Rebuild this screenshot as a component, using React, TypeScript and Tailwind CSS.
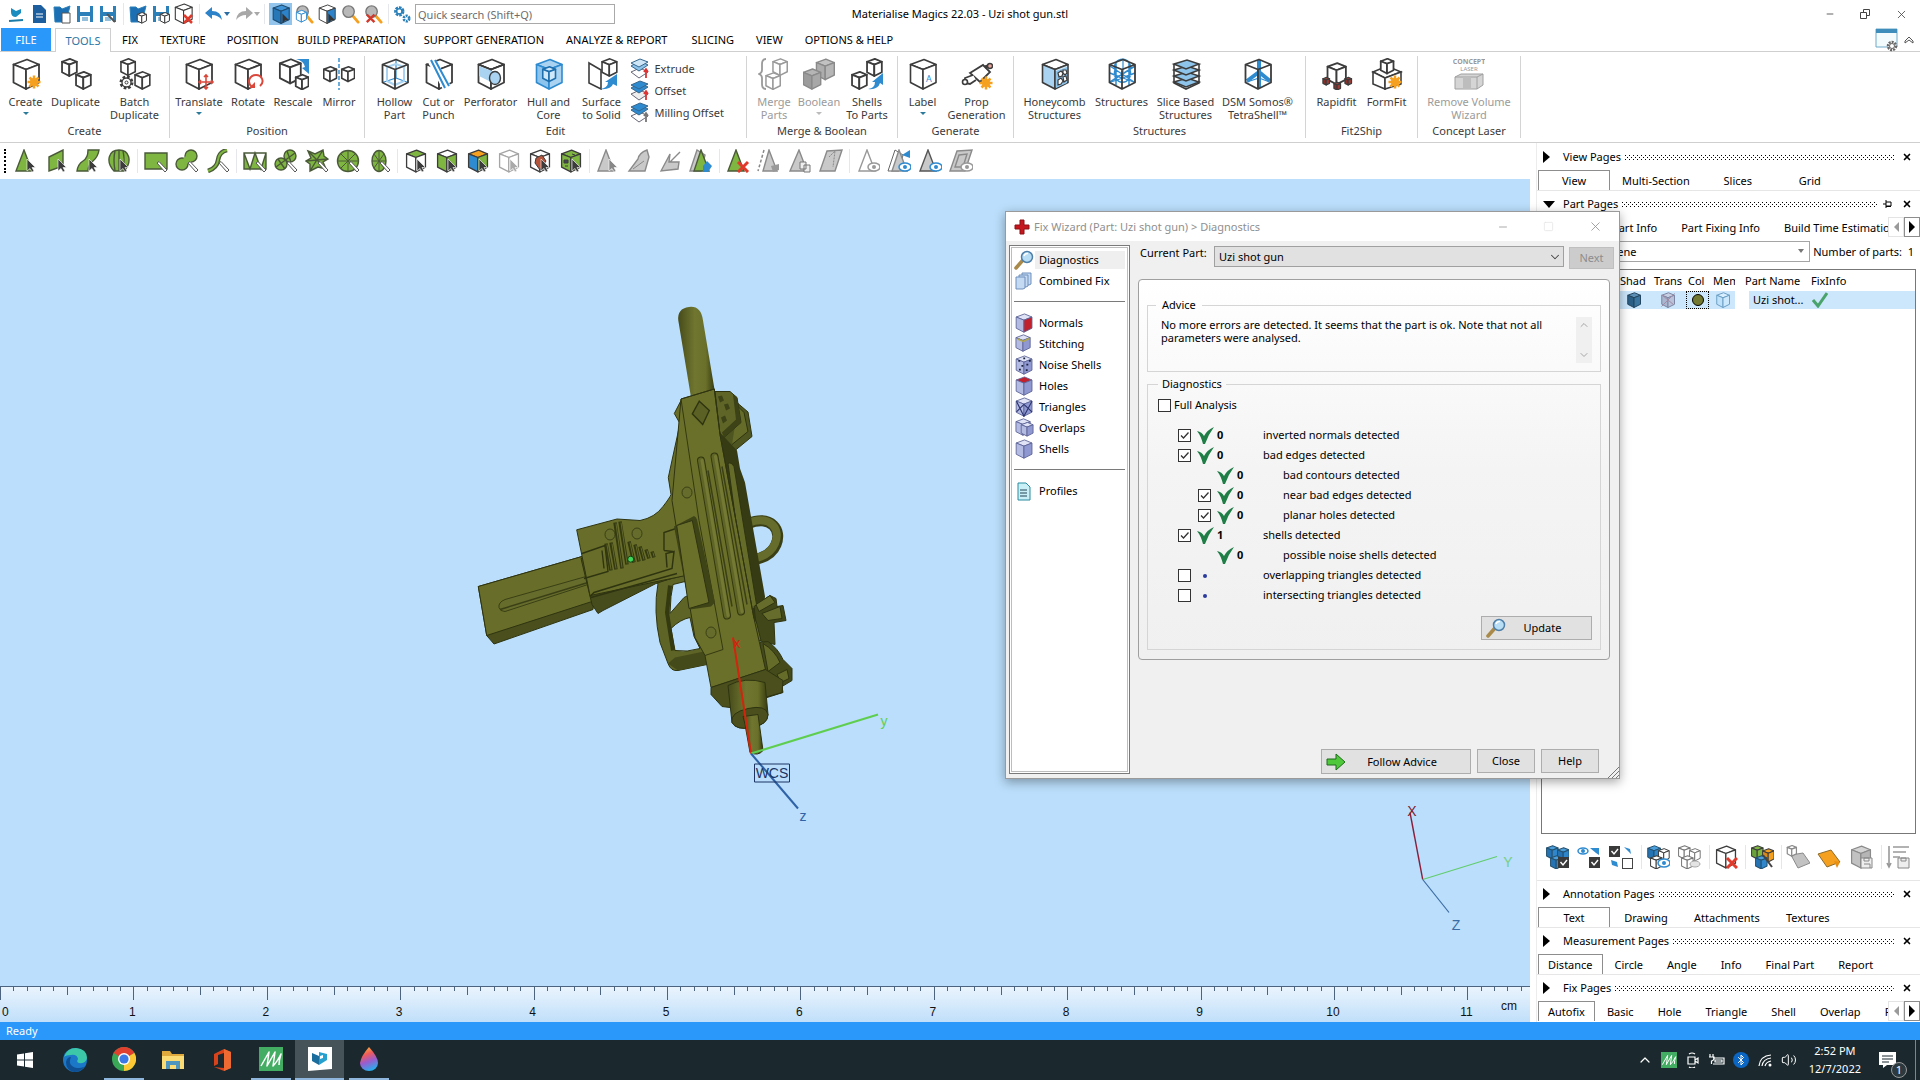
import { useState } from 'react'
import type { ReactNode } from 'react'
import { Bluetooth, ChevronDown, ChevronUp, Minus, Square, Volume2, X } from 'lucide-react'

const INK = '#3c3c3c'
const BLUE = '#2f8bd0'
const PALE = '#a9d3f0'
const ORANGE = '#f5a01e'
const GREEN = '#7fb541'
const RED = '#d9483b'

interface CubeProps {
  x?: number
  y?: number
  s?: number
  top?: string
  left?: string
  right?: string
  stroke?: string
  sw?: number
}

// isometric box on a 32 unit grid
function Cube({ x = 0, y = 0, s = 1, top = '#fff', left = '#fff', right = '#fff', stroke = INK, sw = 2 }: CubeProps) {
  return (
    <g transform={`translate(${x} ${y}) scale(${s})`} stroke={stroke} strokeWidth={sw / s} strokeLinejoin="round">
      <path d="M17 1.500 29 6.500 16 11.500 3.500 6.500Z" fill={top} />
      <path d="M3.500 6.500 16 11.500V31L3.500 24.500Z" fill={left} />
      <path d="M29 6.500 16 11.500V31L29 24.500Z" fill={right} />
    </g>
  )
}

function Burst({ x, y }: { x: number; y: number }) {
  return (
    <g transform={`translate(${x} ${y})`} stroke={ORANGE} strokeWidth="2.500">
      <circle r="4" fill={ORANGE} stroke="none" />
      <path d="M0-6.500V6.500M-6.500 0H6.500M-4.500-4.500 4.500 4.500M4.500-4.500-4.500 4.500" />
    </g>
  )
}

function Wire({ children }: { children?: ReactNode }) {
  return (
    <g fill="none" strokeLinejoin="round">
      <path d="M17 1.500V20M3.500 24.500 17 20 29 24.500" stroke={BLUE} strokeWidth="1.200" />
      {children}
      <path d="M17 1.500 29 6.500V24.500L16 31 3.500 24.500V6.500ZM3.500 6.500 16 11.500 29 6.500M16 11.500V31" stroke={INK} strokeWidth="1.800" />
    </g>
  )
}

const ribbonIcons: Record<string, ReactNode> = {
  create: <><Cube sw={1.8} /><Burst x={24} y={24} /></>,
  duplicate: <><Cube x={0} y={0} s={0.58} sw={1.8} /><Cube x={14} y={13} s={0.58} sw={1.8} /></>,
  batch: (
    <>
      <Cube x={0} y={0} s={0.56} sw={1.6} />
      <Cube x={14} y={13} s={0.58} sw={1.6} />
      <circle cx="7.500" cy="24.500" r="5.500" fill="#fff" stroke={INK} strokeWidth="3" strokeDasharray="2.500 1.800" />
      <circle cx="7.500" cy="24.500" r="4.500" fill="#fff" stroke={INK} strokeWidth="1.300" />
      <circle cx="7.500" cy="24.500" r="1.500" fill="none" stroke={INK} strokeWidth="1" />
    </>
  ),
  translate: (
    <>
      <Cube sw={1.8} />
      <path d="M23 17V31M16 24H30M21 19l2-2 2 2M21 29l2 2 2-2M18 22l-2 2 2 2M28 22l2 2-2 2" fill="none" stroke={RED} strokeWidth="1.600" />
    </>
  ),
  rotate: (
    <>
      <Cube sw={1.8} />
      <path d="M20 29C14 24 18 17 24 17S33 24 28 28" fill="#fff" stroke={RED} strokeWidth="2" />
      <path d="M17 30H23V24" fill={RED} />
    </>
  ),
  rescale: (
    <>
      <Cube s={0.82} sw={1.8} />
      <path d="M19 1Q27 3 28 9L25 10 32 16V1Z" fill={BLUE} />
      <Cube x={17} y={16} s={0.5} sw={1.8} />
    </>
  ),
  mirror: (
    <>
      <Cube x={-1} y={8} s={0.5} sw={1.6} />
      <Cube x={17} y={8} s={0.5} sw={1.6} />
      <path d="M16 0V32" stroke={BLUE} strokeWidth="1.400" strokeDasharray="4 2" />
    </>
  ),
  hollow: <Wire><path d="M8 9V23L16 27 25 23V9L17 6Z" stroke={PALE} strokeWidth="2" /></Wire>,
  cut: (
    <>
      <Cube sw={1.8} />
      <path d="M7 3 22 30M10 2 25 28" stroke="#fff" strokeWidth="5" />
      <path d="M8 2 22 30M12 2 26 28" stroke={BLUE} strokeWidth="2" />
    </>
  ),
  perforator: (
    <>
      <Cube sw={1.8} />
      <path d="M4 8 20 14V26L4 18Z" fill={PALE} />
      <ellipse cx="20" cy="20" rx="5.500" ry="6.500" fill={PALE} stroke={INK} strokeWidth="1.400" />
      <path d="M16 11.500 29 6.500M3.500 6.500 16 11.500" stroke={INK} strokeWidth="1.800" />
    </>
  ),
  hull: (
    <>
      <Cube top={PALE} left="#8cc4ee" right={PALE} stroke={BLUE} sw={1.6} />
      <Cube x={8} y={8} s={0.5} sw={1.6} top="#cfe8fa" left="#cfe8fa" right="#cfe8fa" stroke="#1d6fae" />
    </>
  ),
  surface: (
    <>
      <path d="M3 5 15 12V31L3 25Z" fill="none" stroke={INK} strokeWidth="1.600" />
      <Cube x={14} y={0} s={0.58} sw={1.6} />
      <path d="M14 31Q22 30 22 24L19 24 31 16V28L27 26Q25 32 14 31Z" fill={BLUE} />
    </>
  ),
  merge: (
    <>
      <path d="M8 1Q4 1 4 6V12Q4 15 1 16Q4 17 4 20V26Q4 31 8 31" fill="none" stroke="#9a9a9a" strokeWidth="1.800" />
      <Cube x={13} y={0} s={0.56} sw={1.5} stroke="#9a9a9a" />
      <Cube x={6} y={14} s={0.56} sw={1.5} stroke="#9a9a9a" />
    </>
  ),
  boolean: (
    <>
      <Cube x={11} y={0} s={0.7} sw={1.4} stroke="#8a8a8a" top="#c2c2c2" left="#adadad" right="#b6b6b6" />
      <Cube x={-2} y={10} s={0.68} sw={1.4} stroke="#8a8a8a" top="#b5b5b5" left="#9c9c9c" right="#a8a8a8" />
    </>
  ),
  shells: (
    <>
      <Cube x={14} y={0} s={0.58} sw={1.8} />
      <Cube x={-1} y={13} s={0.58} sw={1.8} />
      <path d="M17 31Q24 30 24 24L21 24 32 15V27L29 25Q27 32 17 31Z" fill={BLUE} />
    </>
  ),
  label: <><Cube sw={1.6} /><text x="19" y="24" fontSize="9" fill={BLUE} fontFamily="Noto Sans">A</text></>,
  prop: (
    <>
      <path d="M9 15 22 7 29 14 19 24Z" fill="#fff" stroke={INK} strokeWidth="1.800" />
      <path d="M12 17 4 20V25L9 26 15 22" fill="#fff" stroke={INK} strokeWidth="1.800" />
      <circle cx="4" cy="24" r="2.500" fill="#fff" stroke={INK} strokeWidth="1.600" />
      <path d="M24 9 30 7" stroke={INK} strokeWidth="3" />
      <circle cx="29" cy="8" r="2.500" fill="#e8a79c" stroke={INK} strokeWidth="1.400" />
      <Burst x={25} y={25} />
    </>
  ),
  honeycomb: (
    <>
      <Cube left={PALE} right="#d9ecf9" sw={1.6} />
      <path d="M17 13 28 9V25L17 30Z" fill="#8ec3ea" />
      <path d="M19 15l3-2 2 2-1 3-3 1zM24 12l3 0 1 3-2 2-2-2zM19 22l3-2 2 3-2 3-3 1zM24 19l3-1 1 4-3 2z" fill="#fff" stroke={INK} strokeWidth="1.200" />
    </>
  ),
  structures: (
    <Wire>
      <path d="M10 5V27M23 5V27M4 15 16 20 29 15M9 12a8 9 0 1 0 15 0a8 8 0 1 0-15 0M4 8 28 24M29 8 4 24" stroke={BLUE} strokeWidth="1.500" />
    </Wire>
  ),
  slice: (
    <>
      {[20, 14, 8, 2].map(y => (
        <path key={y} d={`M4 ${y + 4} 17 ${y} 29 ${y + 4} 16 ${y + 9}Z`} fill="#8ec3ea" stroke={INK} strokeWidth="1.600" />
      ))}
      <path d="M4 6V25L16 31 29 25V6" fill="none" stroke={INK} strokeWidth="1.600" />
    </>
  ),
  dsm: <Wire><path d="M17 2V14L5 23M17 14 28 23M17 14V30" stroke={BLUE} strokeWidth="4" /></Wire>,
  rapidfit: (
    <>
      <Cube x={4} y={4} s={0.72} sw={1.8} />
      <Cube x={1} y={19} s={0.26} sw={1.2} top="#b0413c" left="#8b2f2b" right="#a13a35" />
      <Cube x={23} y={19} s={0.26} sw={1.2} top="#b0413c" left="#8b2f2b" right="#a13a35" />
      <Cube x={12} y={24} s={0.26} sw={1.2} top="#b0413c" left="#8b2f2b" right="#a13a35" />
    </>
  ),
  formfit: (
    <>
      <path d="M2 14 16 8 30 14 14 20Z" fill="#fff" stroke={INK} strokeWidth="1.600" />
      <path d="M2 14 14 20V31L2 26Z" fill="#fff" stroke={INK} strokeWidth="1.600" />
      <path d="M14 20 30 14V26L14 31Z" fill="#fff" stroke={INK} strokeWidth="1.600" />
      <Cube x={8} y={0} s={0.5} sw={1.8} />
      <Burst x={24} y={24} />
    </>
  ),
  concept: (
    <g fontFamily="Noto Sans" fontWeight="700" fill="#9a9a9a" textAnchor="middle">
      <text x="16" y="6" fontSize="7">CONCEPT</text>
      <text x="16" y="13" fontSize="6" fontWeight="400">LASER</text>
      <path d="M2 19 8 16H30V27L24 31H2Z" fill="#d5d5d5" stroke="#a0a0a0" />
      <path d="M2 19H24L30 16M24 19V31" fill="none" stroke="#a0a0a0" />
      <path d="M10 19H18V31H10Z" fill="#bdbdbd" />
    </g>
  ),
}

const ribbonGroups = [
  { title: 'Create', box: 'w-[170px]', items: [
    { icon: 'create', text: 'Create', w: 'w-[50px]', caret: true },
    { icon: 'duplicate', text: 'Duplicate', w: 'w-[50px]' },
    { icon: 'batch', text: 'Batch Duplicate', w: 'w-[68px]' },
  ] },
  { title: 'Position', box: 'w-[195px]', items: [
    { icon: 'translate', text: 'Translate', w: 'w-[54px]', caret: true },
    { icon: 'rotate', text: 'Rotate', w: 'w-[44px]' },
    { icon: 'rescale', text: 'Rescale', w: 'w-[46px]' },
    { icon: 'mirror', text: 'Mirror', w: 'w-[46px]' },
  ] },
  { title: 'Edit', box: 'w-[382px]', items: [
    { icon: 'hollow', text: 'Hollow Part', w: 'w-[44px]' },
    { icon: 'cut', text: 'Cut or Punch', w: 'w-[44px]' },
    { icon: 'perforator', text: 'Perforator', w: 'w-[60px]' },
    { icon: 'hull', text: 'Hull and Core', w: 'w-[56px]' },
    { icon: 'surface', text: 'Surface to Solid', w: 'w-[50px]' },
  ] },
  { title: 'Merge & Boolean', box: 'w-[151px]', items: [
    { icon: 'merge', text: 'Merge Parts', w: 'w-[44px]', off: true },
    { icon: 'boolean', text: 'Boolean', w: 'w-[46px]', off: true, caret: true },
    { icon: 'shells', text: 'Shells\nTo Parts', w: 'w-[50px]' },
  ] },
  { title: 'Generate', box: 'w-[116px]', items: [
    { icon: 'label', text: 'Label', w: 'w-[42px]', caret: true },
    { icon: 'prop', text: 'Prop Generation', w: 'w-[66px]' },
  ] },
  { title: 'Structures', box: 'w-[292px]', items: [
    { icon: 'honeycomb', text: 'Honeycomb Structures', w: 'w-[68px]' },
    { icon: 'structures', text: 'Structures', w: 'w-[66px]' },
    { icon: 'slice', text: 'Slice Based Structures', w: 'w-[62px]' },
    { icon: 'dsm', text: 'DSM Somos® TetraShell™', w: 'w-[82px]' },
  ] },
  { title: 'Fit2Ship', box: 'w-[112px]', items: [
    { icon: 'rapidfit', text: 'Rapidfit', w: 'w-[50px]' },
    { icon: 'formfit', text: 'FormFit', w: 'w-[50px]' },
  ] },
  { title: 'Concept Laser', box: 'w-[103px]', items: [
    { icon: 'concept', text: 'Remove Volume Wizard', w: 'w-[90px]', off: true },
  ] },
]

const menuTabs = [
  { name: 'FIX', pad: 'px-[11px]' },
  { name: 'TEXTURE', pad: 'px-[11px]' },
  { name: 'POSITION', pad: 'px-[10px]' },
  { name: 'BUILD PREPARATION', pad: 'px-[9px]' },
  { name: 'SUPPORT GENERATION', pad: 'px-[9px]' },
  { name: 'ANALYZE & REPORT', pad: 'px-[13px]' },
  { name: 'SLICING', pad: 'px-[11px]' },
  { name: 'VIEW', pad: 'px-[11px]' },
  { name: 'OPTIONS & HELP', pad: 'px-[11px]' },
]

const Pointer = () => <path d="M13 10V22L16 19.500 18 23 20 22 18 18.500H21.500Z" fill="#3c3c3c" stroke="#fff" strokeWidth=".6" />
const Pen = () => <path d="M13 14 21 23 23 21 15 12.500Z" fill="#fff" stroke="#555" />
const Eye = ({ off }: { off?: boolean }) => (
  <>
    <ellipse cx="18" cy="18" rx="6" ry="4" fill="#fff" stroke={off ? '#999' : BLUE} strokeWidth="1.500" />
    <circle cx="18" cy="18" r="2" fill={off ? '#999' : BLUE} />
  </>
)
const lit = { fill: GREEN, stroke: '#4a5a38', strokeWidth: 1.4 }
const dim = { fill: '#c9c9c9', stroke: '#8a8a8a', strokeWidth: 1.4 }

const toolIcons: ReactNode[][] = [
  [
    <><path d="M10 1 18 22H2Z" {...lit} /><Pointer /></>,
    <><path d="M4 8 18 1V17L4 22Z" {...lit} /><Pointer /></>,
    <><path d="M12 1H23Q22 8 17 12T12 22H1Q2 15 7 12T12 1Z" {...lit} /><Pointer /></>,
    <><path d="M7 22C-2 12 2 1 12 1S26 12 17 22ZM8 22Q6 10 8 2M16 22Q18 10 16 2M12 1V22" {...lit} /><Pointer /></>,
  ],
  [
    <><path d="M1 4H23V20H1Z" {...lit} /><Pen /></>,
    <><circle cx="16" cy="7" r="6" {...lit} /><circle cx="7" cy="15" r="6" {...lit} /><path d="M8 10 12 6 17 12 10 16Z" fill={GREEN} /><Pen /></>,
    <><path d="M21 1Q13 3 12 11T2 22" fill="none" stroke="#4a5a38" strokeWidth="4.500" /><path d="M21 1Q13 3 12 11T2 22" fill="none" stroke={GREEN} strokeWidth="2" /><Pen /></>,
  ],
  [
    <><path d="M1 4H23V20H1ZM1 4 7 20 12 4 18 20 23 4" {...lit} /><Pen /></>,
    <><circle cx="16" cy="7" r="6" {...lit} /><circle cx="7" cy="15" r="6" {...lit} /><path d="M2 18 21 4M13 2 17 13M4 10 11 20" stroke="#4a5a38" fill="none" strokeWidth="1.400" /><Pen /></>,
    <><path d="M3 2 10 5 18 1 19 7 23 10 18 13 21 20 13 18 5 22 5 15 1 12 6 9ZM3 2 21 20M18 1 5 22M1 12 23 10" {...lit} /><Pen /></>,
    <><circle cx="12" cy="12" r="10.500" {...lit} /><path d="M12 2V22M2 12H22M5 5 19 19M19 5 5 19" stroke="#4a5a38" /><Pen /></>,
    <><ellipse cx="12" cy="12" rx="7" ry="10.500" {...lit} /><path d="M12 2V22M5 12H19M7 5 17 19M17 5 7 19" stroke="#4a5a38" /><Pen /></>,
  ],
  [
    <><Cube s={0.74} sw={1.3} top={GREEN} /><Pointer /></>,
    <><Cube s={0.74} sw={1.3} left={GREEN} right={GREEN} /><Pointer /></>,
    <><Cube s={0.74} sw={1.3} top={ORANGE} left={BLUE} right={GREEN} /><Pointer /></>,
    <><Cube s={0.74} sw={1.3} stroke="#a5a5a5" /><path d="M13 10V22L16 19.500 18 23 20 22 18 18.500H21.500Z" fill="#aaa" stroke="#fff" strokeWidth=".6" /></>,
    <><Cube s={0.74} sw={1.3} /><path d="M8 9 14 6 18 12 12 21 7 14Z" fill="#b5553c" stroke={INK} /><Pointer /></>,
    <><Cube s={0.74} sw={1.3} top={GREEN} left={GREEN} right={GREEN} /><path d="M5 11h4v3H5zM13 5l3 1M6 17h3" stroke={INK} fill="#445" /><Pointer /></>,
  ],
  [
    <><path d="M10 1 18 22H2Z" {...dim} /><path d="M13 10V22L16 19.500 18 23 20 22 18 18.500H21.500Z" fill="#888" stroke="#fff" strokeWidth=".6" /></>,
    <><path d="M20 1Q12 4 11 10L2 22H18L22 8Z" {...dim} /><path d="M6 20 17 12" stroke="#888" /></>,
    <><path d="M3 22 12 5 11 13H21L20 20Z M12 13 22 3" {...dim} /></>,
    <><path d="M8 1 1 22H12L16 6Z" {...dim} /><path d="M12 1 20 22H5Z" {...lit} /><path d="M14 17 18 12 23 17 19 23 14 23Z" fill={BLUE} /></>,
  ],
  [
    <><path d="M10 1 18 22H2Z" {...lit} /><path d="M12 13 22 23M22 13 12 23" stroke="#e03a2c" strokeWidth="3" /></>,
    <><path d="M12 1 20 22H6Z" {...dim} /><path d="M7 1 1 22" stroke="#888" strokeWidth="1.500" strokeDasharray="3 2" /><path d="M14 17l8-2v6l-6 2z" fill="#999" /></>,
    <><path d="M11 1 19 22H2Z" {...dim} /><path d="M12 13h6v7h-6zM16 16h6v7h-6z" fill="#eee" stroke="#777" /></>,
    <><path d="M8 2 23 1 16 22H1Z" {...dim} /><path d="M10 8 16 2 14 18" stroke="#888" fill="none" strokeDasharray="2 1" /></>,
  ],
  [
    <><path d="M11 1 19 22H3Z" fill="#fff" stroke="#999" strokeWidth="1.400" /><Eye off /></>,
    <><path d="M8 1 1 22H12L16 6Z" fill="#fff" stroke="#666" /><path d="M12 1 20 22H5Z" {...dim} /><path d="M15 6 23 1V9Z" fill={BLUE} /><Eye /></>,
    <><path d="M10 1 18 22H2Z" fill="#c9c9c9" stroke="#555" strokeWidth="1.400" /><Eye /></>,
    <><path d="M8 2 23 1 16 22H1ZM10 6 18 5 14 18H6Z" {...dim} /><Eye off /></>,
  ],
]

function Magnifier({ lens = '#b9b9b9', handle = ORANGE }: { lens?: string; handle?: string }) {
  return (
    <>
      <path d="M13 12 19 19" stroke={handle} strokeWidth="3" strokeLinecap="round" />
      <circle cx="9" cy="8" r="6" fill={lens} stroke="#777" strokeWidth="1.400" />
    </>
  )
}

const Floppy = () => (
  <>
    <path d="M3 3H19V19H3Z" fill="#2b80b9" />
    <path d="M6 3H16V9H6ZM6 13H16V19H6Z" fill="#fff" />
    <path d="M8 15H14M8 17H14" stroke="#2b80b9" />
  </>
)
const Folder = () => <path d="M3 4H9L11 6 19 3 15 19H4Z" fill="#1c6fb3" stroke="#2b80b9" />

const quickIcons: { name: string; art: ReactNode; gap?: boolean }[] = [
  { name: 'Magics', art: <><path d="M6 5 11 8V14Q6 14 6 9ZM11 8 16 6V10L11 14Z" fill="#1a8cc0" /><path d="M4 18 18 17" stroke="#1a7ca8" strokeWidth="2" /></> },
  { name: 'New', art: <><path d="M5 2H13L18 7V20H5Z" fill="#1d5f9e" /><path d="M8 11H15M8 14H15" stroke="#fff" /></> },
  { name: 'Open', art: <><Folder /><path d="M11 10H19V20H11Z" fill="#fff" stroke="#555" /></> },
  { name: 'Save', art: <Floppy /> },
  { name: 'Save as', art: <><Floppy /><path d="M10 11 18 19" stroke="#555" strokeWidth="2" /></> },
  { name: 'Import part', gap: true, art: <><Folder /><Cube x={9} y={9} s={0.36} sw={1} /></> },
  { name: 'Save part', art: <><Floppy /><Cube x={9} y={9} s={0.36} sw={1} /></> },
  { name: 'Unload part', art: <><Cube s={0.66} sw={1.1} /><path d="M11 12 19 20M19 12 11 20" stroke="#e03a2c" strokeWidth="2.500" /></> },
]

const viewIcons: { name: string; art: ReactNode; on?: boolean }[] = [
  { name: 'Select parts', on: true, art: <><Cube s={0.66} sw={1.2} top="#3e93d6" left="#2878b8" right="#2d83c9" stroke="#1e4c73" /><path d="M12 10V20L15 17 19 17Z" fill="#333" /></> },
  { name: 'Zoom part', art: <><Magnifier /><Cube x={1} y={6} s={0.42} sw={1} stroke={BLUE} /></> },
  { name: 'View cube', art: <><Cube s={0.66} sw={1} right="#2d83c9" /><path d="M12 10V20L15 17 19 17Z" fill="#333" /></> },
  { name: 'Zoom', art: <Magnifier /> },
  { name: 'Unzoom', art: <><Magnifier /><path d="M4 11 12 19M12 11 4 19" stroke="#d3382b" strokeWidth="2.500" /></> },
]

function Svg({ size, box = size, children }: { size: number; box?: number; children: ReactNode }) {
  return <svg width={size} height={size} viewBox={`0 0 ${box} ${box}`} className="block shrink-0" aria-hidden="true">{children}</svg>
}

function TitleBar() {
  return (
    <header className="flex h-7 items-center">
      <div className="flex flex-1 items-center pr-2 pl-1">
        {quickIcons.map(q => (
          <button key={q.name} aria-label={q.name} className={q.gap ? 'ml-1 flex w-[26px] justify-center border-l border-gray-200 pl-0.5' : 'flex w-[23px] justify-center'}>
            <Svg size={22}>{q.art}</Svg>
          </button>
        ))}
        <span className="ml-1 h-5 w-px bg-gray-200" />
        <button aria-label="Undo" className="ml-1 flex w-[30px] items-center">
          <Svg size={20}><path d="M1 9 8 3V7Q17 7 18 16Q14 11 8 11V15Z" fill="#2d83c9" /></Svg>
          <span className="border-x-[3px] border-t-[4px] border-x-transparent border-t-[#2b6da3]" />
        </button>
        <button aria-label="Redo" className="flex w-[30px] items-center">
          <Svg size={20}><path d="M19 9 12 3V7Q3 7 2 16Q6 11 12 11V15Z" fill="#a8a8a8" /></Svg>
          <span className="border-x-[3px] border-t-[4px] border-x-transparent border-t-[#a8a8a8]" />
        </button>
        <span className="mr-1 h-5 w-px bg-gray-200" />
        {viewIcons.map(q => (
          <button key={q.name} aria-label={q.name} className={q.on ? 'flex w-[23px] justify-center bg-[#93c5ec] py-px' : 'flex w-[23px] justify-center'}>
            <Svg size={20} box={21}>{q.art}</Svg>
          </button>
        ))}
        <span className="mx-1 h-5 w-px bg-gray-200" />
        <Svg size={18} box={20}>
          <circle cx="7" cy="7" r="4" fill="none" stroke="#2b80b9" strokeWidth="3.500" strokeDasharray="2.600 1" />
          <circle cx="7" cy="7" r="3" fill="none" stroke="#2b80b9" strokeWidth="1.500" />
          <circle cx="15" cy="15" r="3" fill="none" stroke="#2b80b9" strokeWidth="3" strokeDasharray="2.200 1" />
        </Svg>
        <input aria-label="Quick search" placeholder="Quick search (Shift+Q)" className="ml-1 h-5 w-[200px] border border-[#a9a9a9] px-0.5 text-[11px] placeholder:text-[#6d6d6d]" />
      </div>
      <h1 className="text-[11px] text-black">Materialise Magics 22.03 - Uzi shot gun.stl</h1>
      <div className="flex flex-1 items-center justify-end gap-6 pr-3 text-[#444]">
        <button aria-label="Minimize"><Minus size={10} /></button>
        <button aria-label="Restore">
          <Svg size={12}><path d="M1.500 4.500H7.500V10.500H1.500ZM4.500 4.500V1.500H10.500V7.500H7.500" fill="none" stroke="#444" /></Svg>
        </button>
        <button aria-label="Close window"><X size={13} strokeWidth={1.5} /></button>
      </div>
    </header>
  )
}

function MenuBar() {
  return (
    <nav className="flex h-6 items-stretch border-b border-[#cfcfcf] px-px text-black">
      <button className="w-[50px] bg-[#2a97fb] text-white">FILE</button>
      <button className="-mb-px ml-1 w-[56px] border border-b-0 border-[#cfcfcf] bg-white text-[#2d74a3]">TOOLS</button>
      {menuTabs.map(t => (
        <button key={t.name} className={t.pad}>{t.name}</button>
      ))}
      <div className="ml-auto flex items-center gap-1 pr-1">
        <Svg size={24}>
          <path d="M1 1H22V19H1Z" fill="#f4fbfd" stroke="#6fa9c8" />
          <path d="M1 1H22V5H1Z" fill="#3f8dbb" />
          <circle cx="17" cy="18" r="4" fill="#fff" stroke="#666" strokeWidth="2.500" strokeDasharray="2 1" />
          <circle cx="17" cy="18" r="2.500" fill="none" stroke="#666" />
        </Svg>
        <button aria-label="Collapse ribbon"><Svg size={12}><path d="M2 7 6 3 10 7V9L6 6 2 9Z" fill="none" stroke="#555" /></Svg></button>
      </div>
    </nav>
  )
}

const layers = [
  { text: 'Extrude', a: '#8ec3ea', b: '#fff' },
  { text: 'Offset', a: BLUE, b: '#eee' },
  { text: 'Milling Offset', a: BLUE, b: '#fff' },
]

function Ribbon() {
  return (
    <div className="flex h-[91px] shrink-0 border-b border-[#cfcfcf] text-[#3a3a3a]">
      {ribbonGroups.map(group => (
        <section key={group.title} className={`${group.box} my-1 flex shrink-0 flex-col justify-between border-r border-[#d4d4d4]`}>
          <div className="flex justify-center pt-0.5">
            {group.items.map(item => (
              <button key={item.text} disabled={item.off} className={`${item.w} flex flex-col items-center leading-[13px] disabled:text-[#9b9b9b]`}>
                <Svg size={32}>{ribbonIcons[item.icon]}</Svg>
                <span className="pt-[5px] whitespace-pre-line">{item.text}</span>
                {item.caret && <span className={item.off ? 'mt-1 border-x-[3px] border-t-[3px] border-x-transparent border-t-[#bbb]' : 'mt-1 border-x-[3px] border-t-[3px] border-x-transparent border-t-[#2b7a99]'} />}
              </button>
            ))}
            {group.title === 'Edit' && (
              <div className="flex w-[112px] flex-col pl-0.5">
                {layers.map(l => (
                  <button key={l.text} className="flex h-[22px] items-center gap-1">
                    <Svg size={22}>
                      <path d="M2 14 11 10 19 14 10 20Z" fill={l.b} stroke="#667" />
                      <path d="M2 8 11 3 19 7 10 13Z" fill={l.a} stroke="#35668c" />
                      <path d="M2 5 11 1 19 4 10 9Z" fill={l.text === 'Extrude' ? '#cfe6f7' : l.a} stroke="#35668c" />
                      <path d="M17 20V12M15 14 17 11 19 14" stroke={l.text === 'Milling Offset' ? '#777' : '#d33'} strokeWidth="1.800" fill="none" />
                    </Svg>
                    {l.text}
                  </button>
                ))}
              </div>
            )}
          </div>
          <h2 className="text-center leading-[14px]">{group.title}</h2>
        </section>
      ))}
    </div>
  )
}

function SelectionBar() {
  return (
    <div className="flex h-9 shrink-0 items-center pl-1">
      <span className="mr-2 h-6 border-l-2 border-dotted border-black" />
      {toolIcons.map((set, i) => (
        <div key={i} className={i === 0 ? 'flex gap-[7px]' : 'ml-1.5 flex gap-[7px] border-l border-gray-200 pl-1.5'}>
          {set.map((art, j) => (
            <button key={j} aria-label={`Marking tool ${i + 1}.${j + 1}`}><Svg size={24}>{art}</Svg></button>
          ))}
        </div>
      ))}
    </div>
  )
}

const ribs = [
  [606, 543, 611, 570], [611, 542, 616, 569], [615, 522, 622, 568], [620, 521, 627, 564],
  [629, 541, 634, 562], [635, 544, 639, 561], [640, 546, 644, 560], [646, 549, 649, 558], [652, 551, 654, 557],
]

function Scene() {
  const edge = { stroke: '#2f3410', strokeWidth: 1, strokeLinejoin: 'round' as const }
  return (
    <svg className="block h-full w-full" viewBox="0 178 1530 808" preserveAspectRatio="xMidYMid slice" role="img" aria-label="Part in the build scene">
      <defs>
        <linearGradient id="tube" x1="0" x2="1" y1="0" y2="0">
          <stop offset="0" stopColor="#464b1b" />
          <stop offset=".45" stopColor="#70762f" />
          <stop offset=".75" stopColor="#6a7029" />
          <stop offset="1" stopColor="#34390f" />
        </linearGradient>
      </defs>
      {/* rear tube */}
      <path d="M690.700 395 678.300 320Q677 308 689 306.500T703 320L715 392Z" fill="url(#tube)" />
      {/* sling ring */}
      <path d="M748 523C772 514 782 530 776 544Q771 556 754 559" fill="none" stroke="#3a3f15" strokeWidth="11" />
      <path d="M748 522.500C772 513.500 781 530 775 543Q770 555 754 558" fill="none" stroke="#666c2b" strokeWidth="8" />
      {/* sight block */}
      <path d="M738 403 748 411.500 752 436 735 450 722 440Z" fill="#4f5520" {...edge} />
      <path d="M738 406 744 412 748 431 732 444" fill="#656b29" stroke="#2f3410" />
      <path d="M715 391H730L737 397 741 422 724 437 720 434Z" fill="#5f6527" {...edge} />
      <path d="M737 397 741 422 724 437 722 432 736 419 733 394Z" fill="#3d4217" />
      <path d="M718 396l4-1 2 5-4 2zM724 404l4-1 2 5-4 2zM721 417l4-2 2 5-4 3z" fill="#3d4217" />
      {/* shaded side */}
      <path d="M720 432 737 450 740 468 745 482 765 596 762 626 752 625Z" fill="#363b13" />
      <path d="M728 463Q731 461 734 466L757 607 748 610Z" fill="#656b29" stroke="#2f3410" />
      {/* front sight parts */}
      <path d="M754 606 770 595 776 598 777 606 783 605 786 620 774 622 775 644 758 640Z" fill="#424719" {...edge} />
      <path d="M756 604 770 595 775 602 759 611ZM762 613 780 606 782 618 768 620ZM750 625 756 620 761 640 752 642Z" fill="#666c2b" stroke="#2f3410" />
      <path d="M760 642 768 641Q778 648 783 659L792 668V680L782 686 783 692 767 697 763 670Z" fill="#454a1b" {...edge} />
      <path d="M763 643Q775 650 780 662L768 671ZM777 674 787 669 789 678 781 682Z" fill="#656b29" stroke="#2f3410" />
      {/* magazine */}
      <path d="M478.300 586 582 556 594 600 593 609 494 643.500 486.700 635Z" fill="#4a4f1d" {...edge} />
      <path d="M478.300 586 582 556 592 601 486.700 635Z" fill="#686e29" {...edge} />
      <path d="M499 607Q498 602 505 599L586 576 588 584 505 611Q500 611 499 607Z" fill="#666c2b" stroke="#3a3f15" />
      <path d="M500 609 588 582" stroke="#3a3f15" strokeWidth="1.500" />
      {/* guard */}
      <path fillRule="evenodd" d="M656 582 688 574 697 606 706 648 707 664 678 670Q671 671 668 663L660 642Q653 610 658 583ZM673 584 671 596 670 613 684 597 690 594 685 581ZM671 628 675 650Q687 652 700 648L694 636 690 617Q680 619 671 628Z" fill="#5e6426" {...edge} />
      <path d="M668 663 675 657 704 651 707 664 678 670Z" fill="#454a1b" />
      <path d="M670 585 667 612 673 650" fill="none" stroke="#34390f" strokeWidth="4" />
      {/* grip */}
      <path d="M581 558 668 540 686 573 656 583 603 610 598 613 592 604Z" fill="#474c1c" {...edge} />
      <path d="M576.700 529.300 617 518.500 640 520Q655 517 663 506 670 497 671 494L668.300 477 680 423 674.300 413 681 400 696 500 700 572 590 595Z" fill="#686e29" {...edge} />
      <path d="M590 596 594 592 672 568 674 551 666 553 667 567M591 597 677 573" fill="none" stroke="#2f3410" strokeWidth="1.500" />
      <path d="M582 553 605 545 608 571 584 578M602 550 604 568M664 550V532L676 528M664 550 673 551" fill="none" stroke="#2f3410" strokeWidth="1.400" />
      {/* receiver */}
      <path d="M681 398.500 714.300 388.500 720 434 754 618 765.500 669 711 687 705 655 695 637 690 607 680 550 672 500Z" fill="#6a702a" {...edge} />
      <path d="M681 398.500 699 520 723 649 705 655" fill="none" stroke="#34390f" />
      <path d="M681 398.500 714.300 388.500 720 434 754 618" fill="none" stroke="#2f3410" />
      <path d="M674 526 694 515.500Q696 516 697 519L715 602 711 606 690 609Z" fill="#3f4417" />
      <path d="M676.700 525 692.300 520 709 602 689 608Z" fill="#6a702a" stroke="#2f3410" />
      {[[701, 460, 727, 615], [714.5, 456, 741, 611]].map(([a, b, c, d]) => (
        <g key={a} strokeLinecap="round">
          <path d={`M${a} ${b} ${c} ${d}`} stroke="#34390f" strokeWidth="8" />
          <path d={`M${a} ${b} ${c} ${d}`} stroke="#5f6526" strokeWidth="6" />
          <path d={`M${a + 1} ${b} ${c + 1} ${d}`} stroke="#747a34" strokeWidth="3" />
        </g>
      ))}
      <path d="M708 470 732 606M722 466 747 604" stroke="#3b4016" strokeWidth="1.500" />
      <path d="M699.300 400.700 709.300 410 702.700 424 692.300 413.300Z" fill="#5b6124" stroke="#2f3410" strokeWidth="1.400" />
      {[[687, 492], [610, 534], [637, 533], [711, 632]].map(([cx, cy]) => (
        <ellipse key={cx} cx={cx} cy={cy} rx="5" ry="5.500" fill="#666c2b" stroke="#3a3f15" />
      ))}
      {ribs.map(([a, b, c, d]) => (
        <g key={a}>
          <path d={`M${a} ${b} ${c} ${d}`} stroke="#34390f" strokeWidth="3.500" />
          <path d={`M${a + 1} ${b + 1} ${c} ${d - 1}`} stroke="#60662a" strokeWidth="1" />
        </g>
      ))}
      {/* front end */}
      <path d="M711 687 765.500 669 783 680 782 692 730 707 722 706 711 694Z" fill="#4a4f1d" {...edge} />
      <path d="M728 685Q745 676 765 682L768 714Q768 724 752 727T732 722Z" fill="url(#tube)" {...edge} />
      <path d="M732 722Q730 712 748 708T768 714Q768 724 752 727T732 722Z" fill="#4a4f1d" {...edge} />
      <path d="M745 724 743 716 758 714 763 750Q758 756 750 752Z" fill="url(#tube)" {...edge} />
      <circle cx="630.700" cy="558.700" r="3" fill="#3fd65a" stroke="#123d12" />
      {/* part axes */}
      <g fill="none" strokeWidth="2">
        <path d="M733 637 751 753" stroke="#d3240e" />
        <path d="M751 753 878 714" stroke="#5fce4f" />
        <path d="M751 753 798 808" stroke="#2f62a6" />
      </g>
      <path d="M754.500 763.500H789.500V781.500H754.500Z" fill="none" stroke="#1c3564" />
      <g fontFamily="Liberation Sans" fontSize="14" textAnchor="middle">
        <text x="737" y="647" fill="#d3240e">x</text>
        <text x="884" y="725" fill="#5fce4f">y</text>
        <text x="803" y="820" fill="#2f62a6">z</text>
        <text x="772" y="777" fill="#1c3564">WCS</text>
        <text x="1412" y="815" fill="#7e2036">X</text>
        <text x="1508" y="866" fill="#74cf84">Y</text>
        <text x="1456" y="929" fill="#3b6ba3">Z</text>
      </g>
      <g fill="none">
        <path d="M1410 812 1422.700 879" stroke="#8a1f3c" strokeWidth="1.400" />
        <path d="M1422.700 879 1497 856" stroke="#62cc6d" strokeWidth="1.200" />
        <path d="M1422.700 879 1449 912" stroke="#3b6ba3" strokeWidth="1.200" />
      </g>
    </svg>
  )
}

const UNIT = 133.4

function Ruler() {
  return (
    <div className="h-9 shrink-0 border-t border-[#4d6480] bg-linear-to-b from-[#eaf4fd] to-[#c0dffa]">
      <svg className="block h-full w-full" fontFamily="Liberation Sans" fontSize="12" fill="#111">
        {Array.from({ length: 115 }, (_, i) => {
          const x = Math.round((i * UNIT) / 10) + 0.5
          const len = i % 10 === 0 ? 13 : i % 5 === 0 ? 8 : 4
          return <path key={i} d={`M${x} 0V${len}`} stroke="#4d6480" />
        })}
        {Array.from({ length: 12 }, (_, i) => (
          <text key={i} x={i === 0 ? 2 : i * UNIT - 1} y="29" textAnchor={i === 0 ? 'start' : 'middle'}>{i}</text>
        ))}
        <text x="1509" y="23" textAnchor="middle">cm</text>
      </svg>
    </div>
  )
}

function PanelHead({ title, open }: { title: string; open?: boolean }) {
  const id = title.replace(' ', '')
  return (
    <div className="flex h-[26px] items-center gap-1 pr-2 pl-1.5">
      <button aria-label={`Toggle ${title}`} className="w-[14px]">
        {open
          ? <span className="block w-0 border-x-[6px] border-t-[7px] border-x-transparent border-t-black" />
          : <span className="block w-0 border-y-[6px] border-l-[7px] border-y-transparent border-l-black" />}
      </button>
      <h2 className="pl-0.5">{title}</h2>
      <svg className="h-[5px] min-w-0 flex-1">
        <pattern id={id} width="4" height="4" patternUnits="userSpaceOnUse">
          <path d="M0 0H1V1H0ZM2 2H3V3H2Z" fill="#000" />
        </pattern>
        <rect width="100%" height="5" fill={`url(#${id})`} />
      </svg>
      {open && <Svg size={12}><path d="M1 6H4M4 2V10M4 4H9V8H4M4 8.500H9" fill="none" stroke="#000" /></Svg>}
      <button aria-label={`Close ${title}`} className="ml-1"><X size={10} strokeWidth={4} /></button>
    </div>
  )
}

function PageTabs({ tabs, wide, arrows }: { tabs: string[]; wide?: boolean; arrows?: boolean }) {
  const [active, setActive] = useState(tabs[0])
  return (
    <div className="flex h-5 overflow-hidden pl-px">
      <div className="flex min-w-0 flex-1 overflow-hidden">
        {tabs.map(t => (
          <button
            key={t}
            onClick={() => setActive(t)}
            className={`shrink-0 whitespace-nowrap ${wide ? 'min-w-[72px]' : ''} ${t === active ? 'border border-b-0 border-[#8d8d8d] px-[9px]' : 'border-t border-transparent px-3'}`}
          >
            {t}
          </button>
        ))}
      </div>
      {arrows && (
        <div className="flex">
          <button aria-label="Previous tabs" className="flex w-4 items-center justify-center border border-[#e4e4e4]"><span className="border-y-[5px] border-r-[5px] border-y-transparent border-r-[#9a9a9a]" /></button>
          <button aria-label="Next tabs" className="flex w-4 items-center justify-center border border-[#8d8d8d]"><span className="border-y-[6px] border-l-[6px] border-y-transparent border-l-black" /></button>
        </div>
      )}
    </div>
  )
}

const blueCube = { top: '#4d9fdc', left: '#2673b3', right: '#2f86cb', stroke: '#24516f' }
const Tick = ({ x, y }: { x: number; y: number }) => (
  <><rect x={x} y={y} width="11" height="11" fill="#3a3a3a" /><path d={`M${x + 2.5} ${y + 5} l2.500 3 4-5`} fill="none" stroke="#fff" strokeWidth="1.400" /></>
)
const greyCube = { stroke: '#8a8a8a', left: '#c2c2c2', right: '#b5b5b5', top: '#d4d4d4' }

const partIcons: { art: ReactNode; gap?: boolean }[] = [
  { art: <><Cube x={0} y={0} s={0.45} sw={1} {...blueCube} /><Cube x={11} y={2} s={0.45} sw={1} {...blueCube} /><Cube x={4} y={10} s={0.45} sw={1} {...blueCube} /><Tick x={13} y={12} /></> },
  { art: <><ellipse cx="6" cy="6" rx="5" ry="3" fill="none" stroke={BLUE} strokeWidth="1.500" /><circle cx="6" cy="6" r="2" fill={BLUE} /><path d="M13 3 22 3V10L19 8Z" fill={BLUE} /><Tick x={12} y={12} /></> },
  { art: <><Tick x={0} y={1} /><rect x="13.500" y="13.500" width="10" height="10" fill="#fff" stroke="#444" /><path d="M15 2 21 4 22 9ZM2 15 8 17 9 22 3 20Z" fill={BLUE} /></> },
  { gap: true, art: <><Cube x={0} y={0} s={0.5} sw={1} {...blueCube} /><Cube x={11} y={3} s={0.42} sw={1} /><Cube x={3} y={10} s={0.45} sw={1} /><Eye /></> },
  { art: <><Cube x={0} y={0} s={0.45} sw={1} stroke="#777" /><Cube x={11} y={3} s={0.42} sw={1} stroke="#777" /><Cube x={3} y={10} s={0.45} sw={1} stroke="#777" /><ellipse cx="18" cy="19" rx="5" ry="3" fill="#e4e4e4" stroke="#aaa" /></> },
  { gap: true, art: <><Cube s={0.74} sw={1.3} /><path d="M13 13 23 23M23 13 13 23" stroke="#e03a2c" strokeWidth="3" /></> },
  { gap: true, art: <><Cube x={0} y={0} s={0.45} sw={1} top={GREEN} left="#6aa23a" right={GREEN} /><Cube x={11} y={3} s={0.45} sw={1} top={ORANGE} left="#d98a1d" right={ORANGE} /><Cube x={4} y={10} s={0.45} sw={1} {...blueCube} /><path d="M13 10 22 22" stroke="#444" strokeWidth="2" /></> },
  { gap: true, art: <><path d="M5 10 17 8 24 18 12 23Z" fill="#c2c2c2" stroke="#8a8a8a" /><Cube x={0} y={0} s={0.36} sw={1.2} stroke="#8a8a8a" /></> },
  { art: <><path d="M1 9 14 5 23 17 10 22Z" fill={ORANGE} stroke="#8c6a2b" /><path d="M17 16l6 1-3 6z" fill="#e98f10" /></> },
  { art: <><Cube s={0.74} sw={1.2} {...greyCube} /><path d="M12 13H23V23H12Z" fill="#eee" stroke="#888" /><path d="M15 13H20V16H15ZM15 19H21V23" fill="none" stroke="#888" /></> },
  { gap: true, art: <><path d="M3 1V21M1 18 3 22 5 18M7 2H23M7 7H20M7 12H14" fill="none" stroke="#999" strokeWidth="1.600" /><path d="M12 13H23V23H12Z" fill="#eee" stroke="#888" /><path d="M15 13H20V16H15Z" fill="none" stroke="#888" /></> },
]

function SidePanel() {
  return (
    <aside className="ml-1.5 flex w-96 shrink-0 flex-col border-l border-[#ececec] pt-px pb-px text-black">
      <PanelHead title="View Pages" />
      <PageTabs wide tabs={['View', 'Multi-Section', 'Slices', 'Grid']} />
      <section className="flex min-h-0 flex-1 flex-col border-t border-[#e6e6e6]">
        <PanelHead title="Part Pages" open />
        <PageTabs arrows tabs={['Part List', 'Part Info', 'Part Fixing Info', 'Build Time Estimation']} />
        <div className="mt-1 flex items-center justify-between pr-1.5 pl-1">
          <div className="relative flex w-[269px]">
            <select aria-label="Part filter" className="h-[21px] w-full appearance-none border border-[#a5a5a5] bg-white pl-16">
              <option>Scene</option>
            </select>
            <span className="pointer-events-none absolute top-2 right-1.5 border-x-[3px] border-t-[4px] border-x-transparent border-t-[#777]" />
          </div>
          <span>Number of parts:&nbsp; 1</span>
        </div>
        <div className="mx-1 mt-[7px] min-h-0 flex-1 border border-[#777]">
          <table className="w-full table-fixed text-left">
            <thead>
              <tr className="h-[21px]">
                <th className="w-[76px]" />
                {[['Shad', 'w-[34px]'], ['Trans', 'w-[34px]'], ['Col', 'w-[25px]'], ['Mem', 'w-[24px]']].map(([name, w]) => (
                  <th key={name} className={`${w} overflow-hidden pl-0.5 font-normal whitespace-nowrap`}>{name}</th>
                ))}
                <th className="w-[76px] pl-2.5 font-normal">Part Name</th>
                <th className="font-normal">FixInfo</th>
              </tr>
            </thead>
            <tbody>
              <tr className="h-[18px] bg-[#cce6fb]">
                <td />
                <td className="pl-2"><Svg size={16} box={32}><Cube top="#5c8fb5" left="#2b5f86" right="#3a759f" stroke="#23455f" /></Svg></td>
                <td className="pl-2"><Svg size={16} box={32}><Cube top="#c9cfe3" left="#aab6cf" right="#b9c2d9" stroke="#7b86a3" /><path d="M3 29 29 3M4 6 28 26" stroke="#a38aa5" strokeWidth="2" /></Svg></td>
                <td>
                  <span className="flex h-[18px] w-[23px] items-center justify-center border border-dotted border-black">
                    <span className="h-3 w-3 rounded-full border border-black bg-[#72782f]" />
                  </span>
                </td>
                <td className="pl-1"><Svg size={16} box={32}><Cube top="#d9efff" left="#bfe1fa" right="#cce8fc" stroke="#6b9fc4" /></Svg></td>
                <td className="bg-white pl-[14px]"><span className="block h-[18px] bg-[#cce6fb] pl-1 leading-[18px] whitespace-nowrap">Uzi shot...</span></td>
                <td className="pl-px"><Svg size={16}><path d="M1 8 6 14 15 1" fill="none" stroke="#4ba36c" strokeWidth="3" /></Svg></td>
              </tr>
            </tbody>
          </table>
        </div>
        <div className="flex h-[46px] items-center pl-1">
          {partIcons.map((p, i) => (
            <button key={i} aria-label={`Part action ${i + 1}`} className={p.gap ? 'ml-1 flex w-8 justify-center border-l border-[#e6e6e6]' : 'flex w-8 justify-center'}>
              <Svg size={24}>{p.art}</Svg>
            </button>
          ))}
        </div>
      </section>
      <section className="border-t border-[#e6e6e6]">
        <PanelHead title="Annotation Pages" />
        <PageTabs wide tabs={['Text', 'Drawing', 'Attachments', 'Textures']} />
      </section>
      <section className="border-t border-[#e6e6e6]">
        <PanelHead title="Measurement Pages" />
        <PageTabs tabs={['Distance', 'Circle', 'Angle', 'Info', 'Final Part', 'Report']} />
      </section>
      <section className="border-t border-[#e6e6e6]">
        <PanelHead title="Fix Pages" />
        <PageTabs arrows tabs={['Autofix', 'Basic', 'Hole', 'Triangle', 'Shell', 'Overlap', 'Point']} />
      </section>
    </aside>
  )
}

const lilac = { top: '#dfe3f5', left: '#b4bbe3', right: '#8f98d0', stroke: '#5c6396', sw: 1.4 }

const Loupe = () => (
  <>
    <path d="M2 18 9 10" stroke="#a98a4a" strokeWidth="3.500" strokeLinecap="round" />
    <circle cx="13" cy="7" r="5.500" fill="#b8def5" stroke="#4f7fa8" strokeWidth="1.500" />
    <path d="M10 6Q11 3 14 3.500" stroke="#fff" fill="none" strokeWidth="1.500" />
  </>
)
const small = (props: CubeProps, extra?: ReactNode) => <g transform="scale(.62)"><Cube {...lilac} {...props} />{extra}</g>

const wizardPages: { name: string; art: ReactNode; rule?: boolean }[] = [
  { name: 'Diagnostics', art: <Loupe /> },
  { name: 'Combined Fix', art: <>{[[8, 2], [5, 4], [2, 6]].map(([x, y]) => <path key={x} d={`M${x} ${y}h9v11l-2 1h-7z`} fill="#c3daf2" stroke="#6f8fbd" />)}</> },
  { name: 'Normals', rule: true, art: small({ right: '#c2202d' }) },
  { name: 'Stitching', art: small({ s: 0.9 }, <path d="M6 8 15 12 25 7" stroke="#b3a94a" strokeWidth="2.500" fill="none" />) },
  { name: 'Noise Shells', art: small({}, <path d="M7 8h3v3H7zM12 16h3v3h-3zM20 14h3v3h-3zM8 22h3v3H8zM19 23h3v3h-3zM24 8h3v3h-3zM15 4h3v3h-3z" fill="#1d2440" />) },
  { name: 'Holes', art: small({ top: '#c2202d' }) },
  { name: 'Triangles', art: small({}, <path d="M4 7 16 31 29 7M16 12 4 24M16 12 29 24" stroke="#2c3470" strokeWidth="1.800" fill="none" />) },
  { name: 'Overlaps', art: <>{small({ s: 0.9 })}{small({ x: 9, y: 6, s: 0.75 })}</> },
  { name: 'Shells', art: small({}) },
  { name: 'Profiles', rule: true, art: <><path d="M4 2H12L16 6V19H4Z" fill="#c9f0f7" stroke="#2a8ba0" /><path d="M6 9H13M6 12H13M6 15H13" stroke="#245" /></> },
]

const checks = [
  { text: 'inverted normals detected', value: '0', on: true },
  { text: 'bad edges detected', value: '0', on: true },
  { text: 'bad contours detected', value: '0', sub: true, plain: true },
  { text: 'near bad edges detected', value: '0', sub: true, on: true },
  { text: 'planar holes detected', value: '0', sub: true, on: true },
  { text: 'shells detected', value: '1', on: true },
  { text: 'possible noise shells detected', value: '0', sub: true, plain: true },
  { text: 'overlapping triangles detected', value: '' },
  { text: 'intersecting triangles detected', value: '' },
]

function CheckBox({ id, on }: { id: string; on?: boolean }) {
  return (
    <span className="grid h-[13px] w-[13px] shrink-0">
      <input id={id} type="checkbox" defaultChecked={on} className="peer col-start-1 row-start-1 h-[13px] w-[13px] appearance-none border border-[#333] bg-white" />
      <svg className="pointer-events-none col-start-1 row-start-1 hidden h-[13px] w-[13px] peer-checked:block"><path d="M3 6.500 5.500 9 10.500 3.500" fill="none" stroke="#333" strokeWidth="1.300" /></svg>
    </span>
  )
}

function FixWizard() {
  return (
    <div role="dialog" aria-label="Fix Wizard" className="absolute top-[211px] left-[1005px] flex h-[568px] w-[615px] flex-col border border-[#9a9a9a] bg-[#f0f0f0] text-black shadow-[0_3px_10px_rgba(0,0,0,0.35)]">
      <div className="flex h-[29px] shrink-0 items-center gap-2 bg-white px-2 text-[#8f8f8f]">
        <Svg size={16}><path d="M6 1H10V6H15V10H10V15H6V10H1V6H6Z" fill="#c4161c" stroke="#8d1014" /></Svg>
        <h2 className="-ml-1 flex-1">Fix Wizard (Part: Uzi shot gun) &gt; Diagnostics</h2>
        <div className="flex items-center gap-[34px] pr-2">
          <button aria-label="Minimize dialog"><Minus size={12} strokeWidth={1.5} /></button>
          <button aria-label="Maximize dialog" disabled className="text-[#e2e2e2]"><Square size={11} strokeWidth={1.5} /></button>
          <button aria-label="Close dialog"><X size={15} strokeWidth={1.3} /></button>
        </div>
      </div>
      <div className="flex min-h-0 flex-1">
        <ul className="mt-1 mb-1 ml-[3px] w-[121px] border border-[#7a7a7a] bg-white pt-[3px] pr-1 pl-1 outline outline-offset-[-3px] outline-[#bdbdbd]">
          {wizardPages.map(p => (
            <li key={p.name} className={p.rule ? 'mt-[10px] border-t border-[#7a7a7a] pt-[10px]' : ''}>
              <button className="flex h-[21px] w-full items-center gap-px">
                <Svg size={20}>{p.art}</Svg>
                <span className={p.name === 'Diagnostics' ? 'flex-1 bg-[#efefef] py-0.5 pl-1 text-left' : 'pl-1'}>{p.name}</span>
              </button>
            </li>
          ))}
        </ul>
        <div className="flex flex-1 flex-col pr-[5px] pb-1 pl-2">
          <div className="flex items-start pt-[5px]">
            <label htmlFor="current-part" className="w-[76px] pl-0.5">Current Part:</label>
            <div className="relative flex flex-1">
              <select id="current-part" className="h-[21px] w-full appearance-none border border-[#a0a0a0] bg-[#e1e1e1] pl-1"><option>Uzi shot gun</option></select>
              <ChevronDown size={14} strokeWidth={1.8} className="pointer-events-none absolute top-1 right-0.5 text-[#444]" />
            </div>
            <button disabled className="mt-px ml-[5px] h-[22px] w-[45px] border border-[#bfbfbf] bg-[#cccccc] text-[#8d8d8d]">Next</button>
          </div>
          <div className="mt-[10px] mr-1 rounded border border-[#9f9f9f] bg-linear-to-b from-white via-[#f4f4f4] to-[#f0f0f0] px-2 pt-[17px] pb-[9px]">
            <fieldset className="border border-[#d5d5d5] px-2 pb-2">
              <legend className="px-1.5 leading-4">Advice</legend>
              <div className="flex justify-between pt-1 pl-[5px]">
                <p className="w-[400px] pt-px leading-[13px]">No more errors are detected. It seems that the part is ok. Note that not all parameters were analysed.</p>
                <div className="flex h-[46px] w-4 flex-col items-center justify-between bg-[#f0f0f0] py-0.5 text-[#a5a5a5]">
                  <ChevronUp size={12} /><ChevronDown size={12} />
                </div>
              </div>
            </fieldset>
            <fieldset className="mt-1 border border-[#d5d5d5] pr-2 pb-2 pl-2.5">
              <legend className="px-1 leading-4">Diagnostics</legend>
              <div className="flex h-[26px] items-center gap-[3px]">
                <CheckBox id="full-analysis" />
                <label htmlFor="full-analysis">Full Analysis</label>
              </div>
              <ul className="pt-[7px] pl-5">
                {checks.map((c, i) => (
                  <li key={c.text} className={c.sub ? 'flex h-5 items-center pl-5' : 'flex h-5 items-center'}>
                    {c.plain ? <span className="w-[13px]" /> : <CheckBox id={`check-${i}`} on={c.on} />}
                    <span className="ml-1.5 flex w-5 justify-start">
                      {c.value
                        ? <Svg size={18}><path d="M0 5Q5 6 7 10 10 4 17 1 11 9 8 18H6Q4 10 0 5Z" fill="#1f7d46" /></Svg>
                        : <Svg size={18}><circle cx="8" cy="10" r="2" fill="#2a3a9e" /></Svg>}
                    </span>
                    <span className="w-[46px] font-bold">{c.value}</span>
                    <label htmlFor={c.plain ? undefined : `check-${i}`}>{c.text}</label>
                  </li>
                ))}
              </ul>
              <div className="flex justify-end pt-[11px] pb-px">
                <button className="flex h-6 w-[111px] items-center border border-[#adadad] bg-[#e1e1e1] pl-1">
                  <Svg size={20}><Loupe /></Svg>
                  <span className="flex-1 pr-3">Update</span>
                </button>
              </div>
            </fieldset>
          </div>
          <div className="mt-auto flex justify-end gap-1.5 pr-[15px]">
            <button className="flex h-[25px] w-[150px] items-center border border-[#adadad] bg-[#e1e1e1] pl-1">
              <Svg size={20}><path d="M1 7H10V2L19 10 10 18V13H1Z" fill="#4fc83c" stroke="#1d6b1b" /></Svg>
              <span className="flex-1 pr-3">Follow Advice</span>
            </button>
            <button className="h-6 w-[58px] border border-[#adadad] bg-[#e1e1e1]">Close</button>
            <button className="h-6 w-[58px] border border-[#adadad] bg-[#e1e1e1]">Help</button>
          </div>
        </div>
      </div>
      <svg className="absolute right-0 bottom-0 h-3 w-3"><path d="M1 12 12 1M5 12 12 5M9 12 12 9" stroke="#777" /></svg>
    </div>
  )
}

const MTile = ({ s }: { s: number }) => (
  <Svg size={s} box={24}>
    <path d="M0 0H24V24H0Z" fill="#43ad63" />
    <path d="M2 19 10 5 8 19 16 5 14 19Q18 15 22 7 20 13 20 18" fill="none" stroke="#fff" strokeWidth="1.500" strokeLinejoin="round" />
  </Svg>
)

const apps: { name: string; art: ReactNode; run?: boolean; on?: boolean }[] = [
  { name: 'Edge', art: <Svg size={24}><circle cx="12" cy="12" r="12" fill="#1b78c8" /><path d="M1 9Q4 0 13 0 24 1 24 10 23 16 16 15 13 14 15 11 14 6 8 7 3 7 1 9Z" fill="#3cc8a8" /><path d="M8 9Q4 18 14 20 20 20 22 18 18 24 11 24 3 22 3 14 4 9 8 9Z" fill="#0f4f94" /></Svg> },
  { name: 'Chrome', run: true, art: <Svg size={24}><circle cx="12" cy="12" r="12" fill="#3aa757" /><path d="M12 12 1.600 6A12 12 0 0 1 22.400 6Z" fill="#e2402f" /><path d="M12 12 22.400 6A12 12 0 0 1 12 24Z" fill="#fcc934" /><circle cx="12" cy="12" r="6" fill="#fff" /><circle cx="12" cy="12" r="4.600" fill="#3c79e6" /></Svg> },
  { name: 'File Explorer', art: <Svg size={24}><path d="M1 3H9L11 6H23V21H1Z" fill="#e0a93b" /><path d="M1 8H23V21H1Z" fill="#fbdb73" /><path d="M5 13H19V21H15V17H9V21H5Z" fill="#4f96bf" /></Svg> },
  { name: 'Office', art: <Svg size={24}><path d="M4 6 14 1 21 4V20L14 23 4 19 14 20V5L8 7V16L4 18Z" fill="#d8431c" /><path d="M14 1 21 4V20L14 23Z" fill="#ee6a33" /></Svg> },
  { name: 'M', run: true, art: <MTile s={24} /> },
  { name: 'Magics', run: true, on: true, art: <Svg size={24}><path d="M0 0H24V22L0 24Z" fill="#fff" /><path d="M4 6 11 9V18L4 14Z" fill="#1a6d9c" /><path d="M11 9V5L19 7V13L11 18Z" fill="#25a0cf" /><path d="M12 9l3-1v3l-3 1z" fill="#fff" /></Svg> },
  { name: 'Paint', run: true, art: (
    <Svg size={24}>
      <defs>
        <linearGradient id="drop" x1=".3" y1="0" x2=".6" y2="1">
          <stop offset="0" stopColor="#ffb03b" /><stop offset=".3" stopColor="#ef5b5b" /><stop offset=".6" stopColor="#9a5ccf" /><stop offset="1" stopColor="#22b2ee" />
        </linearGradient>
      </defs>
      <path d="M12 0Q21 10 21 16A9 8 0 0 1 3 16Q4 9 12 0Z" fill="url(#drop)" />
    </Svg>
  ) },
]

function TaskBar() {
  return (
    <footer className="flex h-10 shrink-0 items-stretch bg-[#1b292e] text-white">
      <button aria-label="Start" className="flex w-[50px] items-center justify-center">
        <Svg size={16}><path d="M0 2.500 7 1.500V7.500H0ZM8 1.300 16 0V7.500H8ZM0 8.500H7V14.500L0 13.500ZM8 8.500H16V16L8 14.700Z" fill="#fff" /></Svg>
      </button>
      {apps.map(a => (
        <button key={a.name} aria-label={a.name} className={a.on ? 'flex w-[49px] flex-col items-center bg-[#46545a]' : 'flex w-[49px] flex-col items-center'}>
          <span className="flex flex-1 items-center">{a.art}</span>
          {a.run && <span className={a.on ? 'h-0.5 w-full bg-[#8fb7de]' : 'h-0.5 w-10 bg-[#8fb7de]'} />}
        </button>
      ))}
      <div className="ml-auto flex items-center gap-2 pr-1">
        <ChevronUp size={16} strokeWidth={1.8} />
        <MTile s={16} />
        <Svg size={16}><path d="M3 5H10V12H3ZM10 8 13 6V11L10 9M4 2Q7 0 10 2M4 15Q7 17 10 15" fill="none" stroke="#fff" strokeWidth="1.200" /></Svg>
        <Svg size={16}><path d="M4 6H15V12H4M6 8H13V10H6ZM1 2V5M4 2V5M0 5H5V7Q4 9 2.500 9V12" fill="none" stroke="#fff" strokeWidth="1.200" /></Svg>
        <span className="rounded-full bg-[#0a66c2] p-0.5"><Bluetooth size={12} strokeWidth={2} /></span>
        <Svg size={16}><path d="M2 14Q3 4 14 3M5 14Q6 7 14 6M8 14Q9 10 14 9" fill="none" stroke="#fff" strokeWidth="1.200" /><circle cx="13" cy="13" r="1.500" fill="#fff" /></Svg>
        <Volume2 size={16} strokeWidth={1.5} />
        <div className="px-1 text-center leading-[18px]">
          <p>2:52 PM</p>
          <p>12/7/2022</p>
        </div>
        <div className="relative ml-1">
          <Svg size={24}><path d="M2 4H19V17H10L6 20V17H2Z" fill="#fff" /><path d="M5 8H16M5 11H16M5 14H12" stroke="#1b292e" /></Svg>
          <span className="absolute -right-1.5 -bottom-1.5 flex h-4 w-4 items-center justify-center rounded-full border border-[#9a9a9a] bg-[#2c3a40]">1</span>
        </div>
        <span className="ml-1.5 h-full w-px bg-[#7d878b]" />
      </div>
    </footer>
  )
}

export default function App() {
  return (
    <div className="relative flex h-screen flex-col overflow-hidden bg-white font-['Noto_Sans',sans-serif] text-[11px] leading-[14px]">
      <TitleBar />
      <MenuBar />
      <Ribbon />
      <main className="flex min-h-0 flex-1">
        <div className="flex min-w-0 flex-1 flex-col">
          <SelectionBar />
          <div className="min-h-0 flex-1 bg-[#badefb]"><Scene /></div>
          <Ruler />
        </div>
        <SidePanel />
      </main>
      <p className="h-[18px] shrink-0 bg-[#2a97fb] px-1.5 leading-[18px] text-white">Ready</p>
      <TaskBar />
      <FixWizard />
    </div>
  )
}
